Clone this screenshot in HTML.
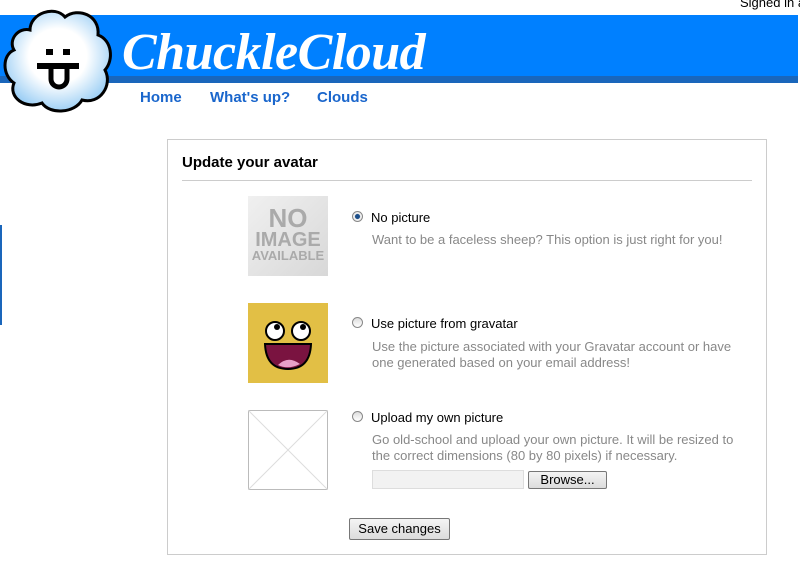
<!DOCTYPE html>
<html><head><style>
body{margin:0;width:800px;height:583px;overflow:hidden;background:#fff;font-family:"Liberation Sans",Arial,sans-serif;position:relative}
.a{position:absolute}
.t{font-size:13px;color:#000}
.d{font-size:13px;color:#888;line-height:16px}
.nav{font-size:15px;font-weight:bold;color:#1a66cc}
.btn{border:1px solid #777;border-radius:2px;background:linear-gradient(#f4f4f4,#dcdcdc);font-size:13px;text-align:center;box-sizing:border-box}
.radio{width:11px;height:11px;border-radius:50%;border:1px solid #888;background:linear-gradient(#ddd,#fff);box-sizing:border-box}
</style></head><body>
<div class="a" style="left:740px;top:-5px;font-size:13px;white-space:nowrap">Signed in a</div>
<div class="a" style="left:0;top:15px;width:798px;height:61px;background:#0080ff"></div>
<div class="a" style="left:0;top:76px;width:798px;height:7px;background:#1a66bb"></div>
<div class="a" style="left:0;top:225px;width:2px;height:100px;background:#1a66bb"></div>
<svg class="a" style="left:0;top:5px" width="116" height="110" viewBox="0 0 116 110">
<defs><radialGradient id="g" cx="50%" cy="45%" r="55%"><stop offset="0.5" stop-color="#fff"/><stop offset="1" stop-color="#9fd0f5"/></radialGradient></defs>
<path d="M30 25 C30 8 55 0 65 12 C78 2 100 10 98 30 C112 35 114 55 105 65 C113 80 100 100 82 95 C75 108 50 110 42 98 C25 105 8 92 14 78 C2 70 2 50 14 45 C8 35 18 22 30 25Z" fill="url(#g)" stroke="#000" stroke-width="3"/>
<rect x="46" y="44" width="7" height="6" fill="#000"/><rect x="63" y="44" width="7" height="6" fill="#000"/>
<rect x="37" y="58" width="42" height="6" fill="#000"/>
<path d="M51 64 v10 a8 8 0 0 0 16 0 v-10" fill="none" stroke="#000" stroke-width="5"/>
</svg>
<div class="a" style="left:122px;top:24px;font-family:'Liberation Serif',serif;font-style:italic;font-weight:bold;font-size:52px;color:#fff;line-height:58px;letter-spacing:-0.5px">ChuckleCloud</div>
<div class="a nav" style="left:140px;top:89px">Home</div>
<div class="a nav" style="left:210px;top:89px">What's up?</div>
<div class="a nav" style="left:317px;top:89px">Clouds</div>
<div class="a" style="left:167px;top:139px;width:598px;height:414px;border:1px solid #ccc"></div>
<div class="a" style="left:182px;top:154px;font-size:15px;font-weight:bold">Update your avatar</div>
<div class="a" style="left:182px;top:180px;width:570px;height:1px;background:#ccc"></div>
<div class="a" style="left:248px;top:196px;width:80px;height:80px;background:linear-gradient(135deg,#f0f0f0,#d8d8d8);text-align:center;color:#aaa;font-weight:bold;line-height:0.95;padding-top:10px;box-sizing:border-box"><div style="font-size:26px">NO</div><div style="font-size:20px">IMAGE</div><div style="font-size:13px">AVAILABLE</div></div>
<svg class="a" style="left:248px;top:303px" width="80" height="80"><rect width="80" height="80" fill="#e2bf45"/>
<circle cx="27" cy="28" r="9" fill="#fff" stroke="#000" stroke-width="2"/><circle cx="53" cy="28" r="9" fill="#fff" stroke="#000" stroke-width="2"/>
<circle cx="29" cy="24" r="3" fill="#000"/><circle cx="55" cy="24" r="3" fill="#000"/>
<path d="M17 41 H63 Q62 66 40 66 Q18 66 17 41Z" fill="#7a1340" stroke="#000" stroke-width="2"/><path d="M30 62 Q40 52 52 61 Q40 67 30 62Z" fill="#e8a0c8"/></svg>
<svg class="a" style="left:248px;top:410px" width="80" height="80"><rect x="0.5" y="0.5" width="79" height="79" fill="#fff" stroke="#bbb"/><path d="M0 0L80 80M80 0L0 80" stroke="#ddd"/></svg>
<div class="a radio" style="left:352px;top:211px;background:radial-gradient(#1d4f8a 35%,#eee 45%)"></div>
<div class="a t" style="left:371px;top:210px">No picture</div>
<div class="a d" style="left:372px;top:232px">Want to be a faceless sheep? This option is just right for you!</div>
<div class="a radio" style="left:352px;top:317px"></div>
<div class="a t" style="left:371px;top:316px">Use picture from gravatar</div>
<div class="a d" style="left:372px;top:339px">Use the picture associated with your Gravatar account or have<br>one generated based on your email address!</div>
<div class="a radio" style="left:352px;top:411px"></div>
<div class="a t" style="left:371px;top:410px">Upload my own picture</div>
<div class="a d" style="left:372px;top:432px">Go old-school and upload your own picture. It will be resized to<br>the correct dimensions (80 by 80 pixels) if necessary.</div>
<div class="a" style="left:372px;top:470px;width:152px;height:19px;border:1px solid #ddd;background:#f2f2f2;box-sizing:border-box"></div>
<div class="a btn" style="left:528px;top:471px;width:79px;height:18px;line-height:16px">Browse...</div>
<div class="a btn" style="left:349px;top:518px;width:101px;height:22px;line-height:20px">Save changes</div>
</body></html>
